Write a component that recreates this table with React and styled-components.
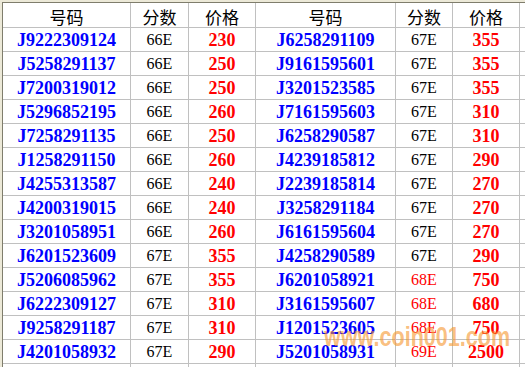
import React from "react";
import styled, { createGlobalStyle } from "styled-components";

const Global = createGlobalStyle`
  html, body { margin: 0; padding: 0; background: #ffffff; }
  body { width: 525px; height: 367px; overflow: hidden; }
`;

const Page = styled.div`
  width: 525px;
  height: 367px;
  overflow: hidden;
  background: #ece9d8;
  padding: 2px 0 0 2px;
  box-sizing: border-box;
`;

const Sheet = styled.div`
  position: relative;
  display: grid;
  grid-template-columns: 127px 57px 66px 139px 56px 66px 1fr;
  grid-template-rows: 24px repeat(15, 23px);
  gap: 1px;
  background: #c0c0c0;
  border-top: 1px solid #7f7d6c;
  border-left: 1px solid #7f7d6c;
`;

const Cell = styled.div`
  background: #ffffff;
  display: flex;
  align-items: center;
  justify-content: center;
  white-space: nowrap;
  line-height: 1;
`;

const HeadCell = styled(Cell)`
  font-family: "Noto Sans CJK SC", sans-serif;
  font-size: 17px;
  color: #000000;
  padding-top: 2px;
`;

const Code = styled(Cell)`
  font-family: "Liberation Serif", serif;
  font-weight: bold;
  font-size: 18px;
  color: #0000ff;
  padding-top: 1px;
`;

const Score = styled(Cell)`
  font-family: "Liberation Serif", serif;
  font-size: 16px;
  color: ${(p) => (p.$red ? "#ff0000" : "#000000")};
  padding-top: 1px;
`;

const Price = styled(Cell)`
  font-family: "Liberation Serif", serif;
  font-weight: bold;
  font-size: 18px;
  color: #ff0000;
  padding-top: 1px;
`;

const Watermark = styled.div`
  position: absolute;
  left: 321px;
  top: 320px;
  font-family: "Liberation Sans", Arial, sans-serif;
  font-weight: bold;
  font-size: 28px;
  line-height: 1;
  color: rgba(246, 150, 45, 0.62);
  transform: scaleX(0.77);
  transform-origin: left center;
  white-space: nowrap;
  pointer-events: none;
`;

const left = [
  ["J9222309124", "66E", "230"],
  ["J5258291137", "66E", "250"],
  ["J7200319012", "66E", "250"],
  ["J5296852195", "66E", "260"],
  ["J7258291135", "66E", "250"],
  ["J1258291150", "66E", "260"],
  ["J4255313587", "66E", "240"],
  ["J4200319015", "66E", "240"],
  ["J3201058951", "66E", "260"],
  ["J6201523609", "67E", "355"],
  ["J5206085962", "67E", "355"],
  ["J6222309127", "67E", "310"],
  ["J9258291187", "67E", "310"],
  ["J4201058932", "67E", "290"],
];

const right = [
  ["J6258291109", "67E", "355"],
  ["J9161595601", "67E", "355"],
  ["J3201523585", "67E", "355"],
  ["J7161595603", "67E", "310"],
  ["J6258290587", "67E", "310"],
  ["J4239185812", "67E", "290"],
  ["J2239185814", "67E", "270"],
  ["J3258291184", "67E", "270"],
  ["J6161595604", "67E", "270"],
  ["J4258290589", "67E", "290"],
  ["J6201058921", "68E", "750"],
  ["J3161595607", "68E", "680"],
  ["J1201523605", "68E", "750"],
  ["J5201058931", "69E", "2500"],
];

export default function App() {
  return (
    <>
      <Global />
      <Page>
        <Sheet>
          <HeadCell>号码</HeadCell>
          <HeadCell>分数</HeadCell>
          <HeadCell>价格</HeadCell>
          <HeadCell>号码</HeadCell>
          <HeadCell>分数</HeadCell>
          <HeadCell>价格</HeadCell>
          <Cell />
          {left.map((l, i) => {
            const r = right[i];
            return (
              <React.Fragment key={i}>
                <Code>{l[0]}</Code>
                <Score>{l[1]}</Score>
                <Price>{l[2]}</Price>
                <Code>{r[0]}</Code>
                <Score $red={r[1] !== "67E"}>{r[1]}</Score>
                <Price>{r[2]}</Price>
                <Cell />
              </React.Fragment>
            );
          })}
          {Array.from({ length: 7 }).map((_, i) => (
            <Cell key={"e" + i} />
          ))}
          <Watermark>www.coin001.com</Watermark>
        </Sheet>
      </Page>
    </>
  );
}
